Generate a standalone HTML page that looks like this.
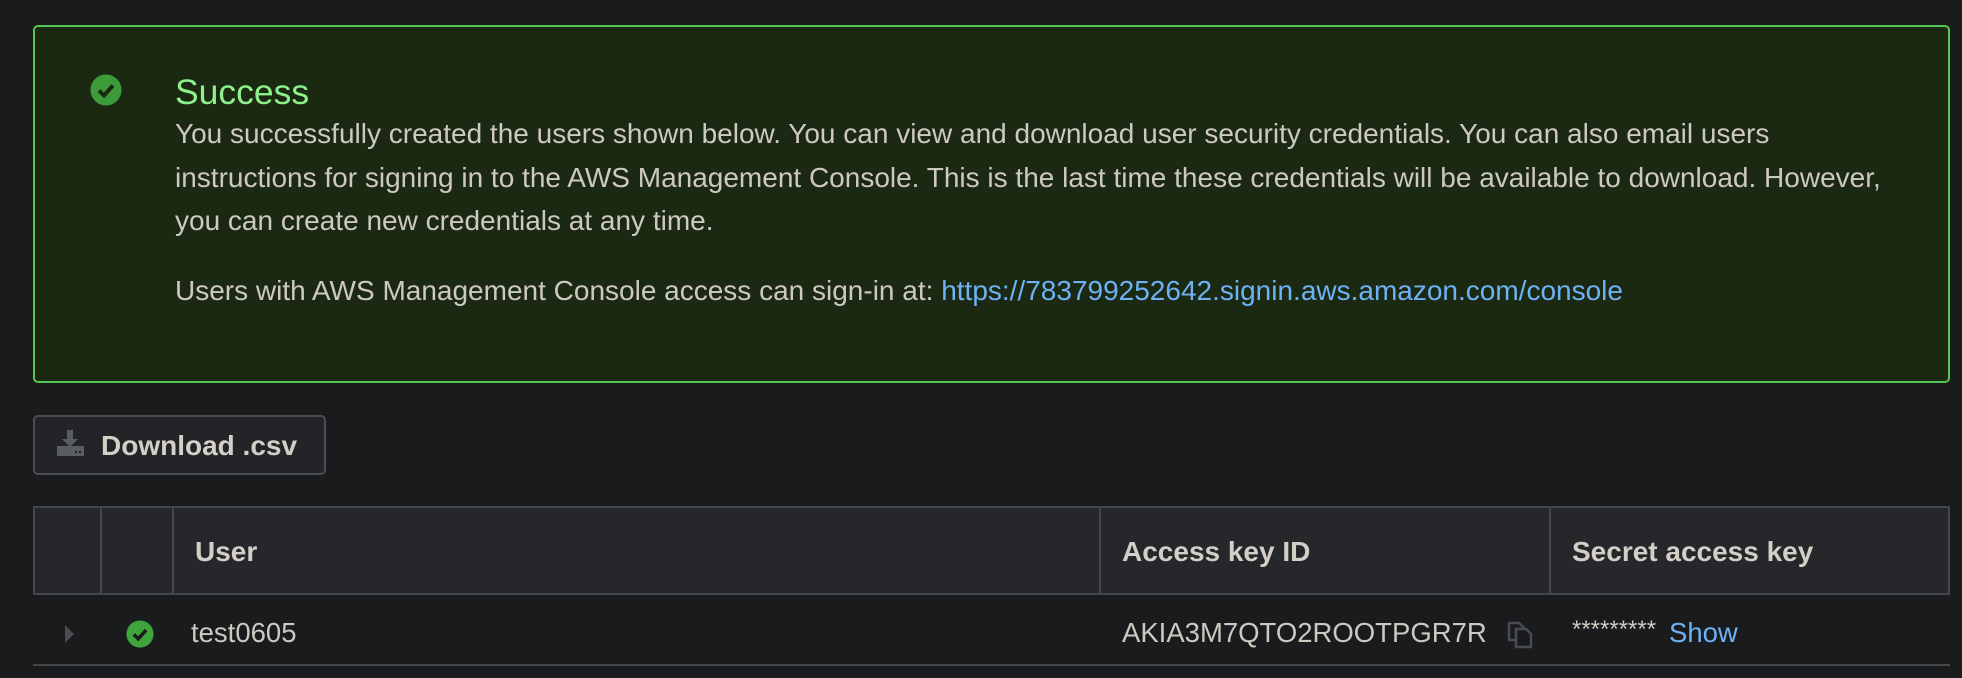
<!DOCTYPE html>
<html><head><style>
*{margin:0;padding:0;box-sizing:border-box}
body{width:1962px;height:678px;background:#1a1b1d;font-family:"Liberation Sans",Helvetica,Arial,sans-serif;color:#cdc8c0;position:relative;overflow:hidden}
.alert{position:absolute;left:33px;top:25px;width:1917px;height:358px;background:#1b2913;border:2px solid #56c64e;border-radius:5px}
.title{position:absolute;left:175px;top:72px;font-size:35.5px;color:#8ef28a}
.body{position:absolute;left:175px;top:112px;width:1760px;font-size:28px;line-height:43.5px;color:#cdc8c0;white-space:nowrap}
.users{position:absolute;left:175px;top:269px;font-size:28px;line-height:43px}
a{color:#6cb2f5;text-decoration:none}
.btn{position:absolute;left:33px;top:415px;width:293px;height:60px;border:2px solid #4c4f52;border-radius:5px;background:#222427;font-weight:bold;font-size:28px;color:#d4cfc6}
.btn span{position:absolute;left:66px;top:13px}
.tbl{position:absolute;left:33px;top:506px;width:1917px;height:89px;background:#25272a;border:2px solid #44484b}
.vl{position:absolute;top:506px;height:89px;width:2px;background:#44484b}
.th{position:absolute;top:536px;font-weight:bold;font-size:28px;color:#d4cfc6}
.rowline{position:absolute;left:33px;top:664px;width:1917px;height:2px;background:#44484b}
.td{position:absolute;top:617px;font-size:27.5px}
</style></head><body>
<div class="alert"></div>
<svg width="32" height="32" viewBox="0 0 32 32" style="position:absolute;left:90px;top:74px"><circle cx="16" cy="16" r="15.5" fill="#3e9b39"/><path d="M9 16.5l5 5 9-10" stroke="#1b2913" stroke-width="4" fill="none"/></svg>
<div class="title">Success</div>
<div class="body">You successfully created the users shown below. You can view and download user security credentials. You can also email users<br>instructions for signing in to the AWS Management Console. This is the last time these credentials will be available to download. However,<br>you can create new credentials at any time.</div>
<div class="users">Users with AWS Management Console access can sign-in at: <a>https://783799252642.signin.aws.amazon.com/console</a></div>
<div class="btn"><svg width="30" height="32" viewBox="0 0 30 32" style="position:absolute;left:20px;top:11px"><path d="M12 2h6v9h5l-8 8-8-8h5z" fill="#5a5d60"/><rect x="2" y="18" width="27" height="10" fill="#5a5d60"/><rect x="20" y="23" width="2" height="2" fill="#222"/><rect x="24" y="23" width="2" height="2" fill="#222"/></svg><span>Download .csv</span></div>
<div class="tbl"></div>
<div class="vl" style="left:100px"></div>
<div class="vl" style="left:172px"></div>
<div class="vl" style="left:1099px"></div>
<div class="vl" style="left:1549px"></div>
<div class="th" style="left:195px">User</div>
<div class="th" style="left:1122px">Access key ID</div>
<div class="th" style="left:1572px">Secret access key</div>
<svg width="12" height="20" style="position:absolute;left:64px;top:624px"><path d="M1 1l9 9-9 9z" fill="#4a4c4f"/></svg>
<svg width="28" height="28" viewBox="0 0 32 32" style="position:absolute;left:126px;top:620px"><circle cx="16" cy="16" r="15.5" fill="#3fa53c"/><path d="M9 16.5l5 5 9-10" stroke="#1a1b1d" stroke-width="4" fill="none"/></svg>
<div class="td" style="left:191px">test0605</div>
<div class="td" style="left:1122px">AKIA3M7QTO2ROOTPGR7R</div>
<svg width="28" height="32" viewBox="0 0 28 32" style="position:absolute;left:1506px;top:617px"><path d="M3 6h10l5 5v12H3z" fill="none" stroke="#4a4d50" stroke-width="2.5"/><path d="M10 12h10l5 5v13H10z" fill="#1a1b1d" stroke="#4a4d50" stroke-width="2.5"/></svg>
<div class="td" style="left:1572px;font-size:24px;top:616px">*********</div>
<div class="td" style="left:1669px"><a>Show</a></div>
<div class="rowline"></div>
</body></html>
